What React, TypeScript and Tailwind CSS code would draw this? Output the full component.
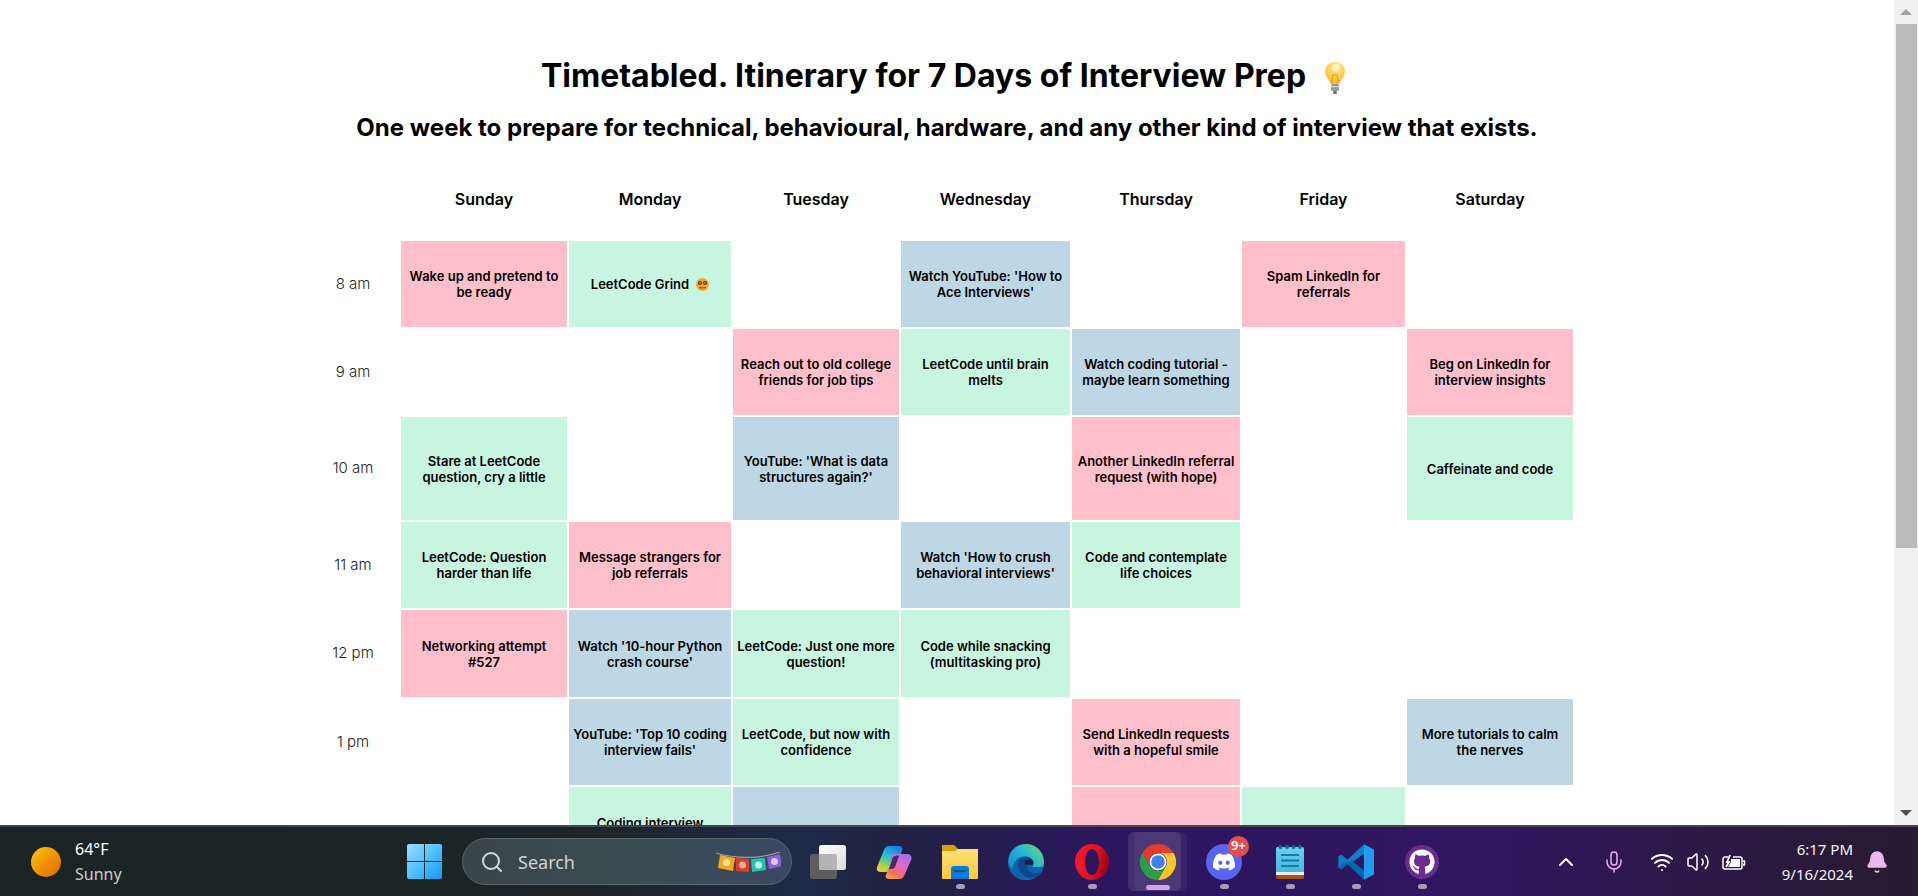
import React from "react";
import { Bell, ChevronUp, Mic, Search, Volume2, Wifi } from "lucide-react";
import { FaDiscord, FaGithub } from "react-icons/fa";

type Tone = "pink" | "green" | "blue";
type Cell = { text: string; tone: Tone; nerd?: boolean } | null;
type Row = { time: string; height: string; cells: Cell[] };

const toneClass: Record<Tone, string> = {
	pink: "bg-[#ffc0cb]",
	green: "bg-[#c8f5df]",
	blue: "bg-[#bdd8e4]",
};

const days = [
	{ name: "Sunday", width: "w-[166px]" },
	{ name: "Monday", width: "w-[162px]" },
	{ name: "Tuesday", width: "w-[166px]" },
	{ name: "Wednesday", width: "w-[169px]" },
	{ name: "Thursday", width: "w-[168px]" },
	{ name: "Friday", width: "w-[163px]" },
	{ name: "Saturday", width: "w-[166px]" },
];

const rows: Row[] = [
	{
		time: "8 am",
		height: "h-[86px]",
		cells: [
			{ text: "Wake up and pretend to be ready", tone: "pink" },
			{ text: "LeetCode Grind", tone: "green", nerd: true },
			null,
			{ text: "Watch YouTube: 'How to Ace Interviews'", tone: "blue" },
			null,
			{ text: "Spam LinkedIn for referrals", tone: "pink" },
			null,
		],
	},
	{
		time: "9 am",
		height: "h-[86px]",
		cells: [
			null,
			null,
			{ text: "Reach out to old college friends for job tips", tone: "pink" },
			{ text: "LeetCode until brain melts", tone: "green" },
			{ text: "Watch coding tutorial - maybe learn something", tone: "blue" },
			null,
			{ text: "Beg on LinkedIn for interview insights", tone: "pink" },
		],
	},
	{
		time: "10 am",
		height: "h-[103px]",
		cells: [
			{ text: "Stare at LeetCode question, cry a little", tone: "green" },
			null,
			{ text: "YouTube: 'What is data structures again?'", tone: "blue" },
			null,
			{ text: "Another LinkedIn referral request (with hope)", tone: "pink" },
			null,
			{ text: "Caffeinate and code", tone: "green" },
		],
	},
	{
		time: "11 am",
		height: "h-[86px]",
		cells: [
			{ text: "LeetCode: Question harder than life", tone: "green" },
			{ text: "Message strangers for job referrals", tone: "pink" },
			null,
			{ text: "Watch 'How to crush behavioral interviews'", tone: "blue" },
			{ text: "Code and contemplate life choices", tone: "green" },
			null,
			null,
		],
	},
	{
		time: "12 pm",
		height: "h-[87px]",
		cells: [
			{ text: "Networking attempt #527", tone: "pink" },
			{ text: "Watch '10-hour Python crash course'", tone: "blue" },
			{ text: "LeetCode: Just one more question!", tone: "green" },
			{ text: "Code while snacking (multitasking pro)", tone: "green" },
			null,
			null,
			null,
		],
	},
	{
		time: "1 pm",
		height: "h-[86px]",
		cells: [
			null,
			{ text: "YouTube: 'Top 10 coding interview fails'", tone: "blue" },
			{ text: "LeetCode, but now with confidence", tone: "green" },
			null,
			{ text: "Send LinkedIn requests with a hopeful smile", tone: "pink" },
			null,
			{ text: "More tutorials to calm the nerves", tone: "blue" },
		],
	},
	{
		time: "2 pm",
		height: "h-[103px]",
		cells: [
			null,
			{ text: "Coding interview practice, again and again", tone: "green" },
			{ text: "", tone: "blue" },
			null,
			{ text: "", tone: "pink" },
			{ text: "", tone: "green" },
			null,
		],
	},
];

const BulbEmoji: React.FC = () => (
	<svg viewBox="0 0 20 32" className="ml-[19px] mr-[8px] inline-block h-8 w-5 align-[-7px]">
		<defs>
			<radialGradient id="bulb" cx="0.55" cy="0.25" r="0.7">
				<stop offset="0" stopColor="#ffe98a" />
				<stop offset="1" stopColor="#fbc02d" />
			</radialGradient>
		</defs>
		<path d="M10 0C4.4 0 0 4.300 0 9.600c0 3.400 1.700 5.600 3.300 7.800 1 1.400 2 2.900 2.300 4.600h8.800c.3-1.700 1.300-3.200 2.300-4.600 1.600-2.200 3.300-4.400 3.300-7.800C20 4.300 15.600 0 10 0z" fill="url(#bulb)" />
		<circle cx="11" cy="5.500" r="4" fill="#fff3b0" />
		<path d="M7 21c-.4-3 .6-5.500 1-8h4c.4 2.500 1.400 5 1 8" fill="none" stroke="#f09a1a" strokeWidth="1.200" />
		<rect x="6" y="22" width="8" height="7" rx="1.500" fill="#9a9a9a" />
		<rect x="6" y="24" width="8" height="1.200" fill="#d5d5d5" />
		<rect x="8" y="29" width="4" height="3" rx="1.200" fill="#6f6f6f" />
	</svg>
);

const NerdEmoji: React.FC = () => (
	<svg viewBox="0 0 13 13" className="ml-[7px] inline-block h-[13px] w-[13px] align-[-2px]">
		<circle cx="6.500" cy="6.500" r="6.500" fill="#f7a52e" />
		<circle cx="4" cy="5" r="2.100" fill="#5a3a1a" />
		<circle cx="9" cy="5" r="2.100" fill="#5a3a1a" />
		<circle cx="4" cy="5" r="0.800" fill="#e9b26a" />
		<circle cx="9" cy="5" r="0.800" fill="#e9b26a" />
		<path d="M3 9.500c1 .8 1.700-.3 2.300.2s1.300.5 2 0 1.500.6 2.700-.2" fill="none" stroke="#5a3a1a" strokeWidth="1" />
	</svg>
);

const Timetable: React.FC = () => (
	<table className="ml-[305px] mt-[13px] table-fixed border-separate border-spacing-[2px] font-['Inter',sans-serif] text-black">
		<thead>
			<tr>
				<th className="h-[80px] w-[92px]" />
				{days.map((day) => (
					<th key={day.name} className={`${day.width} text-center text-base font-semibold`}>
						{day.name}
					</th>
				))}
			</tr>
		</thead>
		<tbody>
			{rows.map((row) => (
				<tr key={row.time}>
					<td className={`${row.height} text-center text-[15px] font-light text-[#222]`}>
						{row.time}
					</td>
					{row.cells.map((cell, i) => (
						<td
							key={i}
							className={`px-1 text-center text-[13px] font-semibold leading-4 ${
								cell ? toneClass[cell.tone] : ""
							}`}
						>
							{cell?.text}
							{cell?.nerd && <NerdEmoji />}
						</td>
					))}
				</tr>
			))}
		</tbody>
	</table>
);

const Scrollbar: React.FC = () => (
	<div className="flex w-6 flex-col bg-[#f0f0f0]">
		<div className="flex h-6 items-center justify-center">
			<div className="h-0 w-0 border-x-[6px] border-b-[6px] border-x-transparent border-b-[#a3a3a3]" />
		</div>
		<div className="mx-[2px] mr-[1px] h-[524px] bg-[#bababa]" />
		<div className="flex-1" />
		<div className="flex h-6 items-center justify-center">
			<div className="h-0 w-0 border-x-[6px] border-t-[6px] border-x-transparent border-t-[#505050]" />
		</div>
	</div>
);

const WindowsLogo: React.FC = () => (
	<svg viewBox="0 0 35 35" className="h-[35px] w-[35px] shrink-0">
		<defs>
			<linearGradient id="win" x1="0" y1="0" x2="1" y2="1">
				<stop offset="0" stopColor="#9bdcff" />
				<stop offset="0.5" stopColor="#4fc3ff" />
				<stop offset="1" stopColor="#1597ff" />
			</linearGradient>
		</defs>
		<path d="M2 0h15v17H0V2a2 2 0 0 1 2-2zM18 0h15a2 2 0 0 1 2 2v15H18zM0 18h17v17H2a2 2 0 0 1-2-2zM18 18h17v15a2 2 0 0 1-2 2H18z" fill="url(#win)" />
	</svg>
);

const Bunting: React.FC = () => (
	<svg viewBox="0 0 66 20" className="h-5 w-[66px]">
		<path d="M1 1c20 6 45 6 64-1" fill="none" stroke="#9aa0a0" strokeWidth="1.200" />
		<path d="M5 3l15 3-2 13-15-3z" fill="#f9a61a" />
		<path d="M21 6l13 1v13l-13-1z" fill="#d8412b" />
		<path d="M36 7l14-1 1 12-14 2z" fill="#27c1b0" />
		<path d="M52 5l13-3 2 12-13 3z" fill="#8b62d3" />
		<circle cx="11.500" cy="10.500" r="3.500" fill="#fde49a" />
		<circle cx="27.500" cy="13" r="3.500" fill="#f2a99a" />
		<circle cx="43.500" cy="13" r="3.500" fill="#b7f0e8" />
		<circle cx="59.500" cy="9.500" r="3.500" fill="#d9c8f5" />
	</svg>
);

const TaskViewIcon: React.FC = () => (
	<svg viewBox="0 0 36 34" className="h-[34px] w-9">
		<defs>
			<linearGradient id="tv" x1="0" y1="0" x2="1" y2="1">
				<stop offset="0" stopColor="#ffffff" />
				<stop offset="1" stopColor="#dcdcdc" />
			</linearGradient>
		</defs>
		<rect x="0" y="9" width="27" height="25" rx="2.500" fill="#5d5d5d" />
		<rect x="9" y="0" width="27" height="25" rx="2.500" fill="url(#tv)" />
		<path d="M9 9h15.500a2.500 2.500 0 0 1 2.500 2.500V25H11.500A2.500 2.500 0 0 1 9 22.500z" fill="#b4b4b4" />
	</svg>
);

const CopilotIcon: React.FC = () => (
	<svg viewBox="0 0 36 34" className="h-[34px] w-9">
		<defs>
			<linearGradient id="cpa" x1="0.7" y1="0" x2="0.2" y2="1">
				<stop offset="0" stopColor="#1b7ff0" />
				<stop offset="0.45" stopColor="#2cc4c9" />
				<stop offset="0.75" stopColor="#9bd44a" />
				<stop offset="1" stopColor="#f5c63a" />
			</linearGradient>
			<linearGradient id="cpb" x1="0.8" y1="0" x2="0.3" y2="1">
				<stop offset="0" stopColor="#a56bf0" />
				<stop offset="0.45" stopColor="#e06ac8" />
				<stop offset="0.8" stopColor="#f56a60" />
				<stop offset="1" stopColor="#f9a03c" />
			</linearGradient>
		</defs>
		<path d="M13 1h10c2 0 3 1 3.500 3L20 24c-1 2.500-3 3-5 3H5c-3 0-5-2-4-5L8 5c1-2.500 3-4 5-4z" fill="url(#cpa)" />
		<path d="M16 9h15c3 0 5 2 4.500 5L29 29c-1 3-3 5-6 5H13c-2 0-3-1-3.500-3L14 20z" fill="url(#cpb)" />
		<path d="M17 12c2-1 4-2 6-1l-4 11c-1 2-4 2-6 2z" fill="#1d1d4a" opacity="0.8" />
	</svg>
);

const ExplorerIcon: React.FC = () => (
	<svg viewBox="0 0 36 34" className="h-[34px] w-9">
		<defs>
			<linearGradient id="fold" x1="0" y1="0" x2="0" y2="1">
				<stop offset="0" stopColor="#ffe07a" />
				<stop offset="1" stopColor="#fcc93a" />
			</linearGradient>
		</defs>
		<path d="M1 0h11l4 4h19a1 1 0 0 1 1 1v6H0V1a1 1 0 0 1 1-1z" fill="#d8a106" />
		<path d="M0 6h13l3-2h19a1 1 0 0 1 1 1v28a1 1 0 0 1-1 1H1a1 1 0 0 1-1-1z" fill="url(#fold)" />
		<path d="M9 24a3 3 0 0 1 3-3h12a3 3 0 0 1 3 3v10H9z" fill="#0a7ad4" />
		<rect x="12" y="25" width="12" height="2" rx="1" fill="#0b4f96" />
	</svg>
);

const EdgeIcon: React.FC = () => (
	<svg viewBox="0 0 36 36" className="h-9 w-9">
		<defs>
			<linearGradient id="edgea" x1="0" y1="1" x2="1" y2="0">
				<stop offset="0" stopColor="#0a76c8" />
				<stop offset="0.55" stopColor="#22b4d6" />
				<stop offset="1" stopColor="#6ee06a" />
			</linearGradient>
		</defs>
		<circle cx="18" cy="18" r="18" fill="url(#edgea)" />
		<path d="M36 20c0 2-1 3-4 3H24c2-2 2-4 1-6-2-4-7-6-12-4-6 2-9 8-8 13C2 22 0 19 0 18 0 27 8 36 18 36c9 0 18-7 18-16z" fill="#0d64ae" />
		<path d="M25 17c-2-4-7-5-11-3-4 2-5 8-3 12 2 5 8 8 14 8 4-1 8-3 10-7-3 2-8 3-12 1-4-2-5-5-3-7 2 0 4-2 5-4z" fill="#0b4a8e" />
		<path d="M22 21c-3 0-5-1-6-3 2-3 7-3 9-1 1 2 0 4-3 4z" fill="#1c1f48" />
	</svg>
);

const OperaIcon: React.FC = () => (
	<svg viewBox="0 0 34 36" className="h-9 w-[34px]">
		<defs>
			<linearGradient id="opera" x1="0" y1="0" x2="1" y2="0.3">
				<stop offset="0" stopColor="#ff1b2d" />
				<stop offset="0.7" stopColor="#e01020" />
				<stop offset="1" stopColor="#a70014" />
			</linearGradient>
		</defs>
		<path
			fillRule="evenodd"
			d="M17 0c9.400 0 17 8 17 18s-7.600 18-17 18S0 28 0 18 7.600 0 17 0zm0 5c-4 0-7 5.800-7 13s3 13 7 13 7-5.800 7-13-3-13-7-13z"
			fill="url(#opera)"
		/>
	</svg>
);

const ChromeIcon: React.FC = () => (
	<svg viewBox="0 0 36 36" className="relative h-9 w-9">
		<path d="M2.410 9A18 18 0 0 1 33.590 9H18A9 9 0 0 0 10.200 22.500z" fill="#e33b2e" />
		<path d="M33.590 9A18 18 0 0 1 18 36L25.800 22.500A9 9 0 0 0 18 9z" fill="#fcc425" />
		<path d="M18 36A18 18 0 0 1 2.410 9L10.200 22.500A9 9 0 0 0 25.800 22.500z" fill="#2c9f45" />
		<circle cx="18" cy="18" r="8.500" fill="#fff" />
		<circle cx="18" cy="18" r="6.800" fill="#3b82ec" />
	</svg>
);

const DiscordIcon: React.FC = () => (
	<div className="relative flex h-9 w-9 items-center justify-center rounded-full bg-[#5865f2]">
		<FaDiscord className="text-[24px] text-white" />
		<div className="absolute -right-[7px] -top-[8px] flex h-[21px] w-[21px] items-center justify-center rounded-full bg-[#e04f50] font-['Noto_Sans',sans-serif] text-[13px] font-semibold text-white">
			9+
		</div>
	</div>
);

const NotepadIcon: React.FC = () => (
	<svg viewBox="0 0 28 35" className="h-[35px] w-7">
		<defs>
			<linearGradient id="pad" x1="0" y1="0" x2="0" y2="1">
				<stop offset="0" stopColor="#6fd0ee" />
				<stop offset="1" stopColor="#42b4dc" />
			</linearGradient>
		</defs>
		<rect x="0" y="3" width="28" height="27" rx="1.500" fill="url(#pad)" />
		<rect x="0" y="28" width="28" height="3" fill="#e9edef" />
		<path d="M0 31h28v2.500a1.500 1.500 0 0 1-1.500 1.500h-25A1.500 1.500 0 0 1 0 33.500z" fill="#a9500f" />
		<circle cx="4.500" cy="3" r="2" fill="#0f6f8e" />
		<circle cx="11" cy="3" r="2" fill="#0f6f8e" />
		<circle cx="17.500" cy="3" r="2" fill="#0f6f8e" />
		<circle cx="24" cy="3" r="2" fill="#0f6f8e" />
		<rect x="5" y="10" width="18" height="2" fill="#0f7da6" />
		<rect x="5" y="15.500" width="18" height="2" fill="#0f7da6" />
		<rect x="5" y="21" width="18" height="2" fill="#0f7da6" />
	</svg>
);

const VsCodeIcon: React.FC = () => (
	<svg viewBox="0 0 100 100" className="h-9 w-9">
		<path d="M26 44L9 30l-8 5v30l8 5 17-14 20-6z" fill="#0a7fcb" />
		<path d="M1 50v15l8 5L74 12V1z" fill="#0a86d6" opacity="0" />
		<path d="M72 1L26 44 9 30l-8 5 17 15 28-4 28-20z" fill="#0a7fcb" />
		<path d="M74 74L42 50H18L1 65l8 5 17-14 46 43z" fill="#0066ad" />
		<path d="M72 1l24 12c2.500 1 4 3 4 6v62c0 3-1.500 5-4 6L72 99z" fill="#1f9cf0" />
		<path d="M74 26L42 50l32 24z" fill="#0b1a50" opacity="0" />
	</svg>
);

const GithubIcon: React.FC = () => (
	<div className="flex h-[34px] w-[34px] items-center justify-center rounded-full bg-[#6a2c91]">
		<FaGithub className="text-[26px] text-white" />
	</div>
);

const Dot: React.FC = () => (
	<div className="absolute bottom-[7px] left-[29px] h-[5px] w-[9px] rounded-full bg-[#a99ab8]" />
);

const AppSlot: React.FC<{ children: React.ReactNode; dot?: boolean }> = ({ children, dot }) => (
	<div className="relative flex h-full w-[66px] items-center justify-center">
		{children}
		{dot && <Dot />}
	</div>
);

const BatteryIcon: React.FC = () => (
	<svg viewBox="0 0 24 20" className="h-5 w-6" fill="none" stroke="#fff" strokeWidth="1.500">
		<path d="M6 5H3a2 2 0 0 0-2 2v8a2 2 0 0 0 2 2h15a2 2 0 0 0 2-2V7a2 2 0 0 0-2-2h-7" />
		<path d="M21 9h1.500v4H21" />
		<path d="M4 15l3-5H5l3-7" strokeWidth="1.800" />
		<path d="M9 7h9v8H6l3-5z" fill="#fff" stroke="none" />
	</svg>
);

const Taskbar: React.FC = () => (
	<div className="flex h-[71px] items-center border-t-2 border-[#45454f] bg-[linear-gradient(90deg,#1b2424_0%,#1c2526_30%,#1e2a48_42%,#1f2340_46%,#2c1660_58%,#30165e_78%,#2e1848_88%,#261b30_100%)] font-['Noto_Sans',sans-serif] text-white">
		<div className="flex w-[407px] shrink-0 items-center pl-[31px]">
			<div className="h-[30px] w-[30px] rounded-full bg-[linear-gradient(135deg,#ffc800,#e06200)]" />
			<div className="ml-[14px] flex flex-col text-base">
				<span className="leading-[25px]">64°F</span>
				<span className="leading-[25px] text-[#c9cdcd]">Sunny</span>
			</div>
		</div>
		<WindowsLogo />
		<div className="ml-5 flex h-[47px] w-[330px] shrink-0 items-center rounded-full border border-[#5b6668] bg-[linear-gradient(90deg,#3a4648,#384c54_60%,#3b4766)] pl-[17px] pr-[10px]">
			<Search className="h-[24px] w-[24px] text-[#d5d9d9]" strokeWidth={2} />
			<span className="ml-[14px] text-lg text-[#d0d5d5]">Search</span>
			<div className="ml-auto">
				<Bunting />
			</div>
		</div>
		<div className="ml-[3px] flex h-full shrink-0">
			<AppSlot>
				<TaskViewIcon />
			</AppSlot>
			<AppSlot>
				<CopilotIcon />
			</AppSlot>
			<AppSlot dot>
				<ExplorerIcon />
			</AppSlot>
			<AppSlot>
				<EdgeIcon />
			</AppSlot>
			<AppSlot dot>
				<OperaIcon />
			</AppSlot>
			<AppSlot>
				<div className="absolute bottom-[5px] left-[9px] h-[59px] w-[53px] rounded-md bg-white/5" />
				<div className="absolute bottom-[5px] left-[3px] h-[59px] w-[53px] rounded-md bg-white/10" />
				<ChromeIcon />
				<div className="absolute bottom-[6px] left-[21px] h-[5px] w-6 rounded-full bg-[#d8a0e4]" />
			</AppSlot>
			<AppSlot dot>
				<DiscordIcon />
			</AppSlot>
			<AppSlot dot>
				<NotepadIcon />
			</AppSlot>
			<AppSlot dot>
				<VsCodeIcon />
			</AppSlot>
			<AppSlot dot>
				<GithubIcon />
			</AppSlot>
		</div>
		<ChevronUp className="ml-[99px] h-6 w-6 shrink-0" strokeWidth={2} />
		<Mic className="ml-6 h-6 w-6 shrink-0 text-[#e8b4ec]" strokeWidth={1.500} />
		<Wifi className="ml-6 h-6 w-6 shrink-0" strokeWidth={2} />
		<Volume2 className="ml-3 h-6 w-6 shrink-0" strokeWidth={1.500} />
		<div className="ml-3 shrink-0">
			<BatteryIcon />
		</div>
		<div className="ml-[7px] flex w-[100px] shrink-0 flex-col items-end text-[15px] leading-[25px] text-[#f2f2f2]">
			<span>6:17 PM</span>
			<span>9/16/2024</span>
		</div>
		<Bell className="ml-[12px] h-6 w-6 shrink-0 fill-[#ecb6f0] text-[#ecb6f0]" strokeWidth={1.500} />
	</div>
);

export default function App() {
	return (
		<div className="flex h-[896px] flex-col overflow-hidden bg-white">
			<div className="flex h-[825px] shrink-0">
				<main className="flex-1 overflow-hidden font-['Inter',sans-serif] text-black">
					<h1 className="mt-[56px] text-center text-[32px] font-bold leading-10">
						Timetabled. Itinerary for 7 Days of Interview Prep
						<BulbEmoji />
					</h1>
					<h2 className="mt-4 text-center text-2xl font-bold leading-8">
						One week to prepare for technical, behavioural, hardware, and any other kind of interview that exists.
					</h2>
					<Timetable />
				</main>
				<Scrollbar />
			</div>
			<Taskbar />
		</div>
	);
}
